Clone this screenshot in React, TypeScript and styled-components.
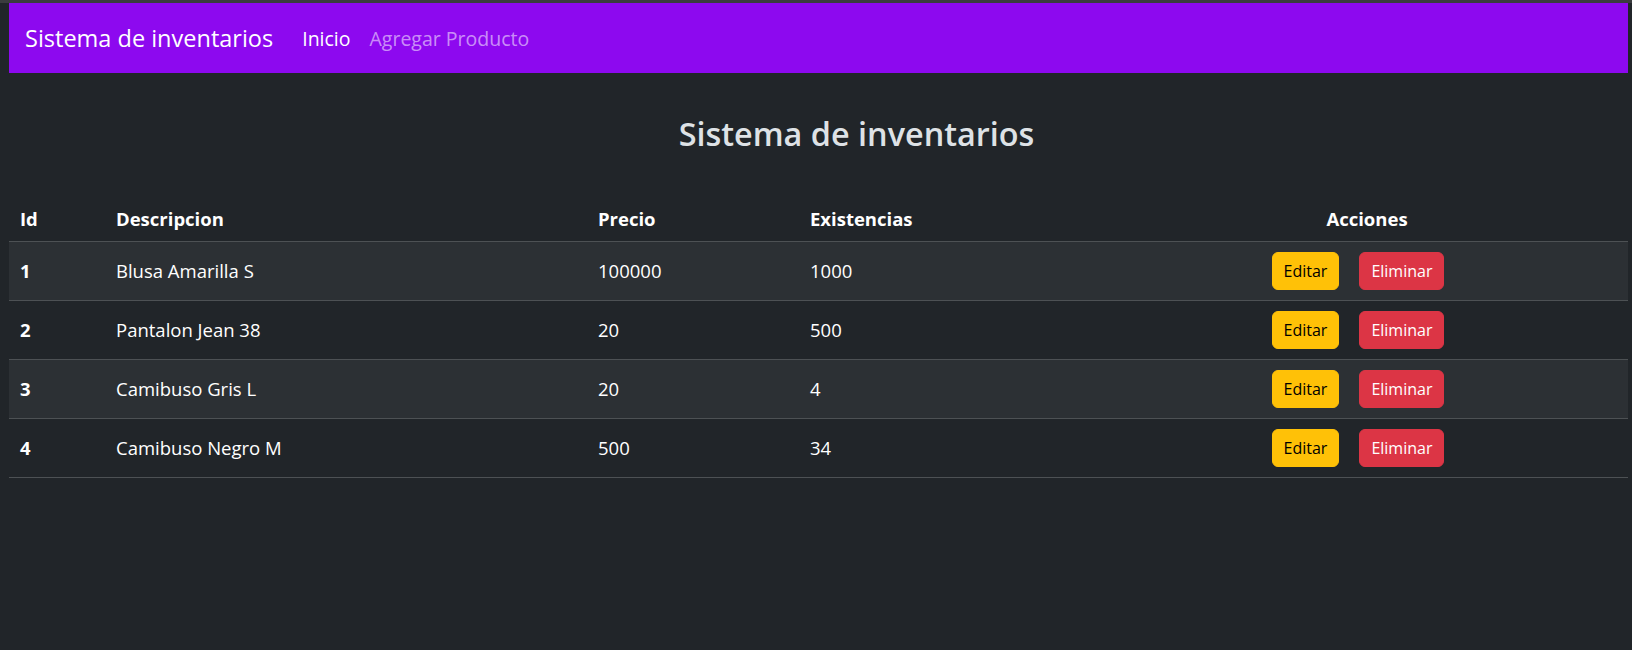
import React from "react";
import styled, { createGlobalStyle } from "styled-components";

const GlobalStyle = createGlobalStyle`
  html, body {
    margin: 0;
    padding: 0;
    background: #212529;
  }
  body {
    font-family: "Open Sans", "Noto Sans", sans-serif;
    color: #dee2e6;
  }
`;

const TopStrip = styled.div`
  height: 3px;
  background: #3b3c3e;
`;

const Page = styled.div`
  padding: 0 4px 0 9px;
`;

const Navbar = styled.nav`
  height: 70px;
  background: #8d09ef;
  display: flex;
  align-items: center;
  padding: 0 16px;
`;

const Brand = styled.span`
  font-size: 23.5px;
  color: #fff;
  margin-right: 29px;
`;

const NavLinks = styled.div`
  display: flex;
  gap: 19px;
`;

const NavLink = styled.a<{ $active?: boolean }>`
  font-size: 19.5px;
  color: ${(p) => (p.$active ? "#fff" : "rgba(255,255,255,0.55)")};
  text-decoration: none;
`;

const Heading = styled.h2`
  margin: 41px 0 44px;
  padding-left: 76px;
  text-align: center;
  font-size: 32.4px;
  font-weight: 600;
  line-height: 1.2;
  color: #dee2e6;
`;

const Table = styled.table`
  width: 100%;
  border-collapse: collapse;
  color: #fff;
  font-size: 18.5px;
`;

const HeadCell = styled.th<{ $center?: boolean }>`
  text-align: ${(p) => (p.$center ? "center" : "left")};
  font-weight: 700;
  padding: 10px 11px;
  line-height: 24px;
  border-bottom: 1px solid #4d5154;
`;

const Row = styled.tr<{ $striped?: boolean }>`
  background: ${(p) => (p.$striped ? "#2c3034" : "transparent")};
  border-bottom: 1px solid #4d5154;
`;

const Cell = styled.td<{ $bold?: boolean }>`
  padding: 10px 11px;
  line-height: 24px;
  font-weight: ${(p) => (p.$bold ? 700 : 400)};
  vertical-align: middle;
`;

const Button = styled.button<{ $variant: "warning" | "danger" }>`
  display: inline-block;
  height: 38px;
  padding: 0 11px;
  border: 1px solid ${(p) => (p.$variant === "warning" ? "#ffc107" : "#dc3545")};
  background: ${(p) => (p.$variant === "warning" ? "#ffc107" : "#dc3545")};
  color: ${(p) => (p.$variant === "warning" ? "#000" : "#fff")};
  border-radius: 6px;
  font-family: inherit;
  font-size: 16px;
  line-height: 24px;
  cursor: pointer;
`;

const Actions = styled.div`
  display: flex;
  justify-content: center;
  gap: 20px;
  padding-right: 18px;
`;

const products = [
  { id: 1, desc: "Blusa Amarilla S", price: "100000", stock: "1000" },
  { id: 2, desc: "Pantalon Jean 38", price: "20", stock: "500" },
  { id: 3, desc: "Camibuso Gris L", price: "20", stock: "4" },
  { id: 4, desc: "Camibuso Negro M", price: "500", stock: "34" },
];

export default function App() {
  return (
    <>
      <GlobalStyle />
      <TopStrip />
      <Page>
        <Navbar>
          <Brand>Sistema de inventarios</Brand>
          <NavLinks>
            <NavLink $active href="#">Inicio</NavLink>
            <NavLink href="#">Agregar Producto</NavLink>
          </NavLinks>
        </Navbar>
        <Heading>Sistema de inventarios</Heading>
        <Table>
          <colgroup>
            <col style={{ width: 96 }} />
            <col style={{ width: 482 }} />
            <col style={{ width: 212 }} />
            <col style={{ width: 307 }} />
            <col />
          </colgroup>
          <thead>
            <tr>
              <HeadCell>Id</HeadCell>
              <HeadCell>Descripcion</HeadCell>
              <HeadCell>Precio</HeadCell>
              <HeadCell>Existencias</HeadCell>
              <HeadCell $center>Acciones</HeadCell>
            </tr>
          </thead>
          <tbody>
            {products.map((p, i) => (
              <Row key={p.id} $striped={i % 2 === 0}>
                <Cell $bold>{p.id}</Cell>
                <Cell>{p.desc}</Cell>
                <Cell>{p.price}</Cell>
                <Cell>{p.stock}</Cell>
                <Cell>
                  <Actions>
                    <Button $variant="warning">Editar</Button>
                    <Button $variant="danger">Eliminar</Button>
                  </Actions>
                </Cell>
              </Row>
            ))}
          </tbody>
        </Table>
      </Page>
    </>
  );
}
